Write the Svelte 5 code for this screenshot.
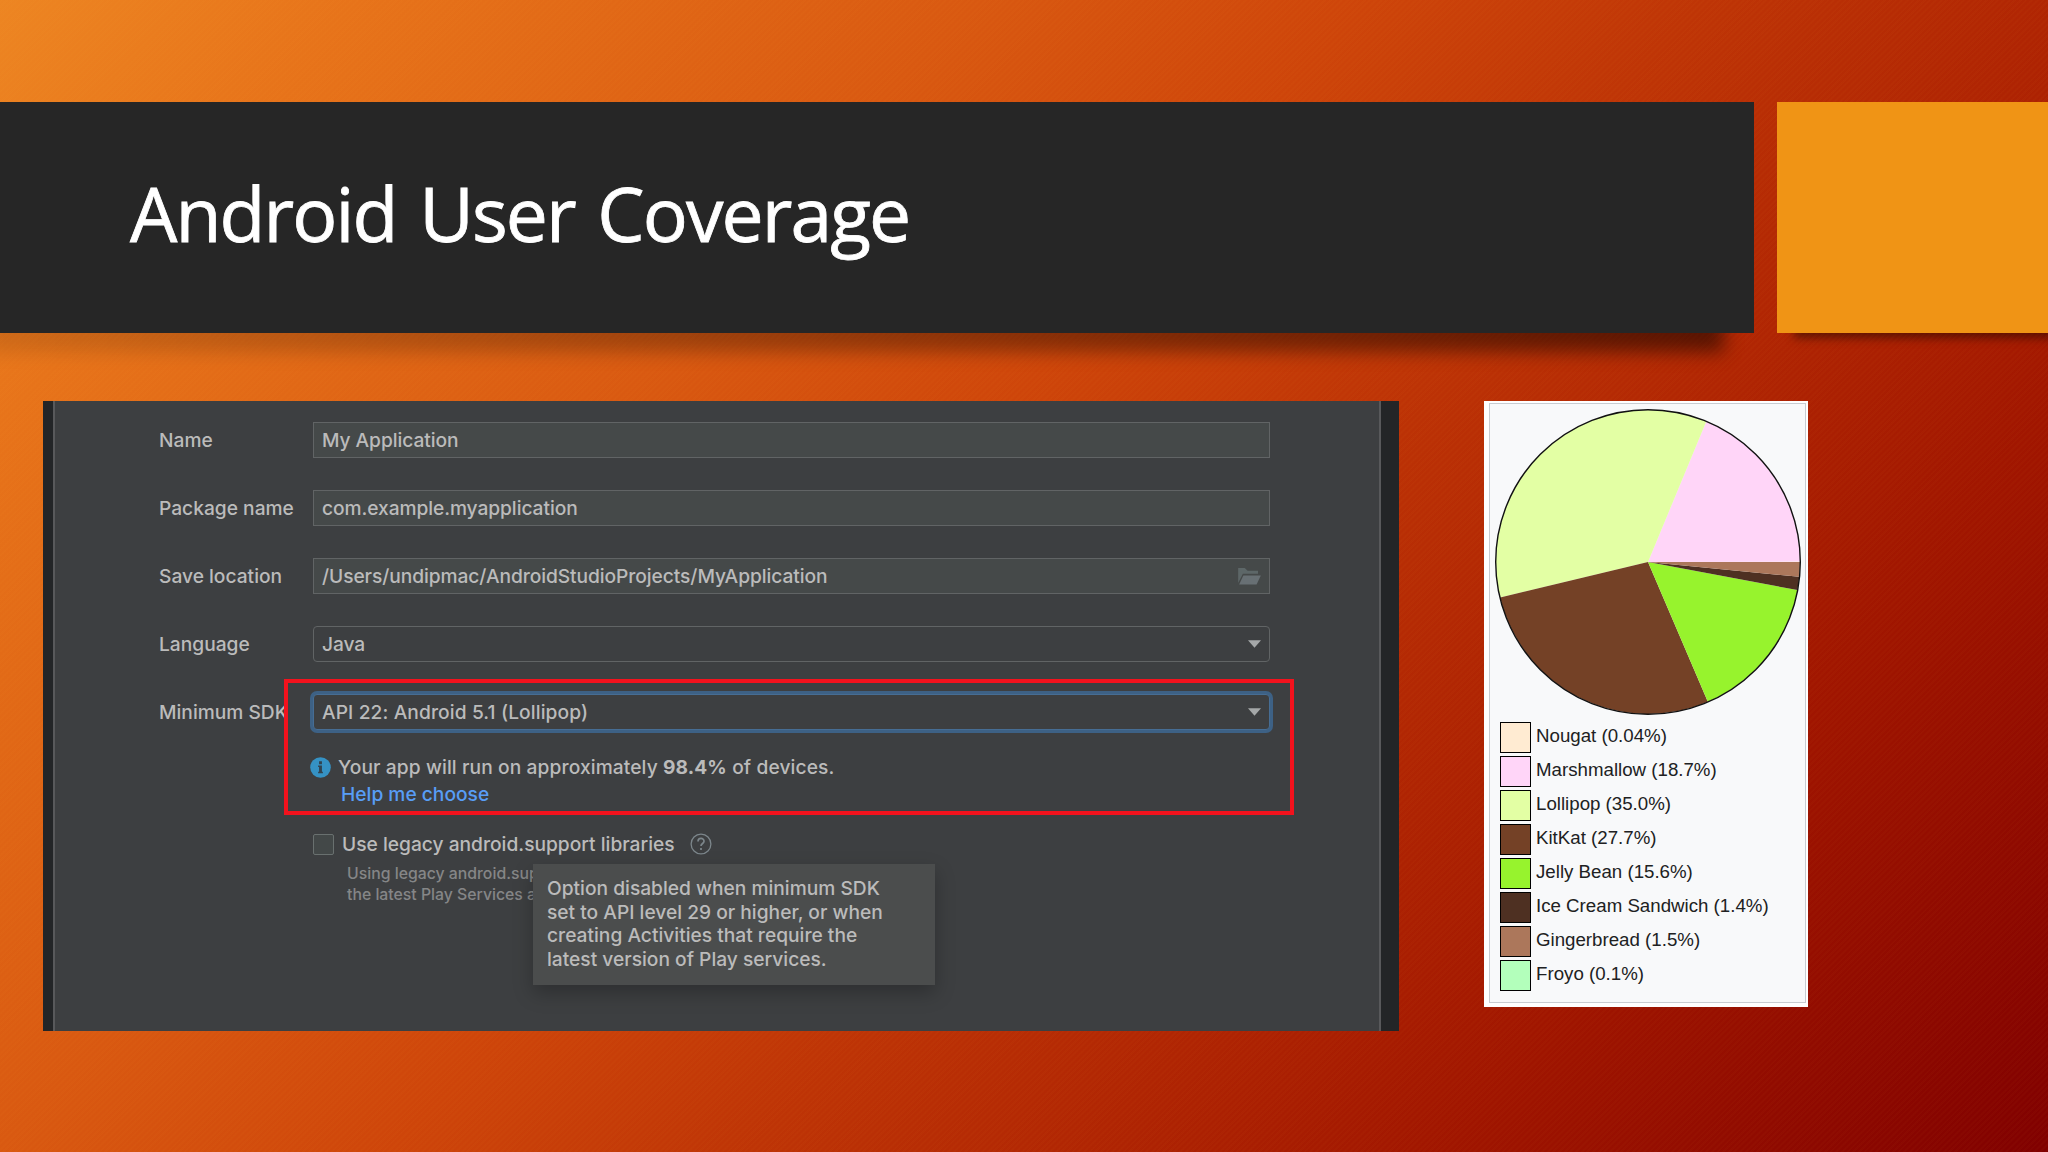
<script lang="ts">
  type Field = {
    label: string
    value: string
    kind: 'text' | 'path' | 'select'
    focused?: boolean
  }

  const fields: Field[] = [
    { label: 'Name', value: 'My Application', kind: 'text' },
    { label: 'Package name', value: 'com.example.myapplication', kind: 'text' },
    {
      label: 'Save location',
      value: '/Users/undipmac/AndroidStudioProjects/MyApplication',
      kind: 'path'
    },
    { label: 'Language', value: 'Java', kind: 'select' },
    { label: 'Minimum SDK', value: 'API 22: Android 5.1 (Lollipop)', kind: 'select', focused: true }
  ]

  const versions = [
    { name: 'Nougat', share: '0.04', color: '#ffebd2' },
    { name: 'Marshmallow', share: '18.7', color: '#ffd5f8' },
    { name: 'Lollipop', share: '35.0', color: '#e3ffa4' },
    { name: 'KitKat', share: '27.7', color: '#744126' },
    { name: 'Jelly Bean', share: '15.6', color: '#97f32d' },
    { name: 'Ice Cream Sandwich', share: '1.4', color: '#4e3022' },
    { name: 'Gingerbread', share: '1.5', color: '#ac775b' },
    { name: 'Froyo', share: '0.1', color: '#b3ffbb' }
  ]

  const radius = 152

  function point(share: number): string {
    const angle = (share / 100) * Math.PI * 2
    return `${radius * Math.cos(angle)} ${-radius * Math.sin(angle)}`
  }

  // slices run counter-clockwise from three o'clock
  // Froyo is too thin to see, so Gingerbread closes the circle
  let start = 0
  const slices = versions.slice(0, -1).map((v, i, all) => {
    const end = i === all.length - 1 ? 100 : start + Number(v.share)
    const d = `M0 0L${point(start)}A${radius} ${radius} 0 0 0 ${point(end)}Z`
    start = end
    return { name: v.name, color: v.color, d }
  })
</script>

<main class="slide">
  <header>
    <div class="title-bar"><h1>Android User Coverage</h1></div>
    <div class="accent"></div>
  </header>

  <div class="content">
    <section class="studio">
      <form class="form">
        {#each fields as field (field.label)}
          <div class="row">
            <span class="label">{field.label}</span>
            <div class="field {field.kind}" class:focused={field.focused}>
              <span>{field.value}</span>
              {#if field.kind === 'path'}
                <svg width="23" height="17" viewBox="0 0 24 18" aria-hidden="true">
                  <path d="M0 16V0h7l3 3h11v3H5z" fill="#5d6768" />
                  <path d="M5.500 8H24l-4.500 9.500H1z" fill="#687074" />
                </svg>
              {:else if field.kind === 'select'}
                <svg width="13" height="8" viewBox="0 0 14 8" aria-hidden="true">
                  <path d="M0 0h14L7 8z" fill="#a5a8a9" />
                </svg>
              {/if}
            </div>
          </div>
        {/each}

        <div class="coverage">
          <svg width="21" height="21" viewBox="0 0 22 22" aria-hidden="true">
            <circle cx="11" cy="11" r="10.800" fill="#3592c4" />
            <path d="M9.500 4.500h3v3h-3zM8.500 9h4v6.500h1V17h-5v-1.500h1v-5h-1z" fill="#31434f" />
          </svg>
          <p>Your app will run on approximately <b>98.4%</b> of devices.</p>
        </div>
        <span class="help">Help me choose</span>

        <div class="legacy">
          <span class="checkbox"></span>
          <span class="legacy-label">Use legacy android.support libraries</span>
          <svg width="22" height="22" viewBox="0 0 22 22" fill="none" aria-hidden="true">
            <circle cx="11" cy="11" r="9.900" stroke="#7c868b" stroke-width="1.300" />
            <path
              d="M8 8.500c0-4 6-4 6-.300 0 2.300-3 2.300-3 4.800M11 15v2"
              stroke="#7c868b"
              stroke-width="1.700"
            />
          </svg>
        </div>
        <p class="note">Using legacy android.sup<br />the latest Play Services a</p>
      </form>

      <div class="highlight"></div>
      <div class="tooltip" role="tooltip">
        Option disabled when minimum SDK<br />
        set to API level 29 or higher, or when<br />
        creating Activities that require the<br />
        latest version of Play services.
      </div>
    </section>

    <section class="chart">
      <div class="chart-frame">
        <svg class="pie" width="308" height="308" viewBox="-154 -154 308 308" aria-hidden="true">
          {#each slices as slice (slice.name)}
            <path d={slice.d} fill={slice.color} />
          {/each}
          <circle r="152.300" fill="none" stroke="#111" stroke-width="1.400" />
        </svg>
        <ul>
          {#each versions as v (v.name)}
            <li>
              <span class="swatch" style="background: {v.color}"></span>
              <span class="version">{v.name} ({v.share}%)</span>
            </li>
          {/each}
        </ul>
      </div>
    </section>
  </div>
</main>

<style>
  :global(body) {
    margin: 0;
  }

  .slide {
    box-sizing: border-box;
    isolation: isolate;
    width: 2048px;
    height: 1152px;
    padding-top: 102px;
    overflow: hidden;
    background:
      repeating-linear-gradient(135deg, rgba(255, 190, 60, 0.025) 0 2px, transparent 2px 4px),
      linear-gradient(
        130deg,
        #ed8522 0%,
        #e7731a 12%,
        #d95911 32%,
        #ce450a 45%,
        #be3406 57%,
        #b02503 68%,
        #a01500 80%,
        #800000 100%
      );
  }

  header {
    display: flex;
    gap: 23px;
    height: 231px;
  }

  .title-bar {
    position: relative;
    display: flex;
    align-items: center;
    width: 1754px;
    background: #262626;
  }

  /* the shadow grows stronger towards the right end of the bar */
  .title-bar::after {
    content: '';
    position: absolute;
    z-index: -1;
    left: -40px;
    right: 30px;
    bottom: -19px;
    height: 60px;
    background: linear-gradient(to right, rgba(0, 0, 0, 0.1), rgba(0, 0, 0, 0.5));
    filter: blur(9px);
  }

  h1 {
    margin: 0 0 9px 130px;
    color: #fff;
    font: 400 75px/1 'Open Sans', sans-serif;
    letter-spacing: -1.900px;
    word-spacing: 5px;
    -webkit-text-stroke: 0.800px #fff;
    white-space: nowrap;
  }

  .accent {
    flex: 1;
    background: #f09415;
    box-shadow: 12px 10px 9px -5px rgba(0, 0, 0, 0.45);
  }

  .content {
    display: flex;
    align-items: flex-start;
    gap: 86px;
    padding: 68px 0 0 43px;
  }

  .studio {
    position: relative;
    box-sizing: border-box;
    width: 1356px;
    height: 630px;
    padding: 0 18px 0 10px;
    background: #232527;
    color: #bbb;
    font: 450 19.200px/24px Inter, sans-serif;
  }

  .form {
    box-sizing: border-box;
    height: 100%;
    padding: 21px 109px 0 104px;
    border: solid #58595b;
    border-width: 0 2px;
    background: #3d3f41;
  }

  .row {
    display: flex;
    align-items: center;
    height: 36px;
    margin-bottom: 32px;
  }

  .label {
    width: 154px;
    flex-shrink: 0;
    white-space: nowrap;
  }

  .field {
    box-sizing: border-box;
    display: flex;
    align-items: center;
    justify-content: space-between;
    flex: 1;
    height: 36px;
    padding: 0 8px;
    border: 1px solid #616465;
    background: #454949;
    letter-spacing: -0.070px;
    white-space: nowrap;
  }

  .select {
    border-radius: 4px;
    background: #3d3f41;
  }

  .focused {
    border-color: #466d94;
    box-shadow: 0 0 0 3px #3d6185;
    letter-spacing: 0.100px;
  }

  .coverage {
    display: flex;
    align-items: center;
    gap: 7px;
    margin: -7px 0 0 151px;
    letter-spacing: 0.100px;
  }

  p {
    margin: 0;
    white-space: nowrap;
  }

  .help {
    display: block;
    margin: 3px 0 0 182px;
    color: #589df6;
  }

  .legacy {
    display: flex;
    align-items: center;
    margin: 26px 0 0 154px;
  }

  .legacy-label {
    margin: 0 15px 0 8px;
  }

  .checkbox {
    box-sizing: border-box;
    width: 21px;
    height: 21px;
    border: 1px solid #69706f;
    border-radius: 2px;
    background: #434848;
  }

  .note {
    margin: 7px 0 0 188px;
    color: #858687;
    font-size: 15.800px;
    line-height: 21px;
  }

  .highlight {
    position: absolute;
    box-sizing: border-box;
    left: 241px;
    top: 278px;
    width: 1010px;
    height: 136px;
    border: 4px solid #f3121d;
  }

  .tooltip {
    position: absolute;
    box-sizing: border-box;
    left: 490px;
    top: 463px;
    width: 402px;
    height: 121px;
    padding: 13px 14px;
    background: #4b4d4d;
    box-shadow: 0 8px 18px rgba(0, 0, 0, 0.25);
    line-height: 23.500px;
    white-space: nowrap;
  }

  .chart {
    box-sizing: border-box;
    width: 324px;
    height: 606px;
    margin-left: -1px;
    padding: 2px 2px 4px 5px;
    background: #fff;
  }

  .chart-frame {
    box-sizing: border-box;
    height: 100%;
    padding: 4px 0 0 4px;
    border: 1px solid #c8ccd1;
    background: #f8f9fa;
  }

  .pie {
    display: block;
  }

  ul {
    display: grid;
    gap: 3px;
    margin: 6px 0 0 6px;
    padding: 0;
    list-style: none;
  }

  li {
    display: flex;
    gap: 5px;
    height: 31px;
    color: #202122;
    font: 18.700px/27px 'Liberation Sans', sans-serif;
    white-space: nowrap;
  }

  .swatch {
    box-sizing: border-box;
    width: 31px;
    height: 31px;
    border: 1px solid #000;
  }
</style>
